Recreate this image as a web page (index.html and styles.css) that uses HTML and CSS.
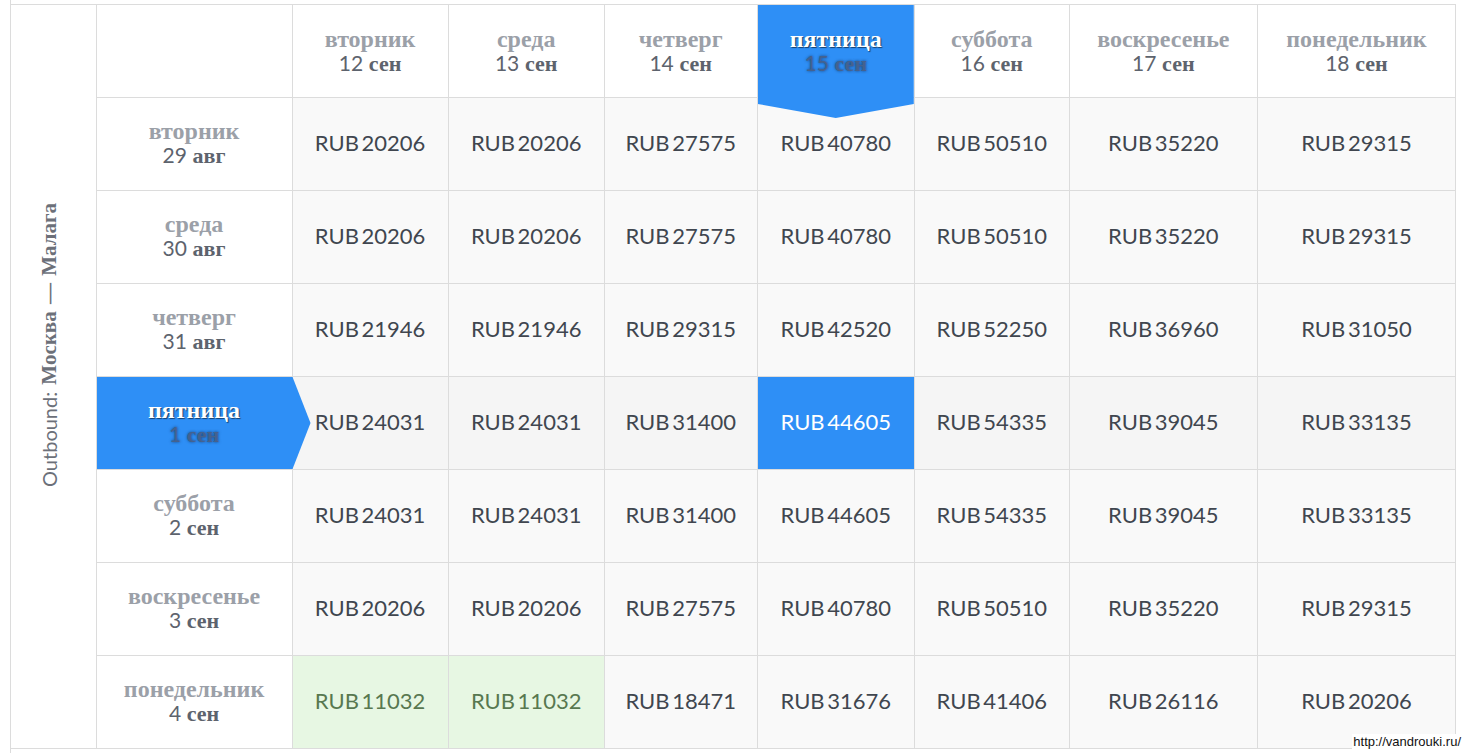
FILE: index.html
```html
<!DOCTYPE html>
<html lang="ru">
<head>
<meta charset="utf-8">
<title>Calendar prices</title>
<link rel="stylesheet" href="styles.css">
</head>
<body>
<div class="wrap">
<table class="grid">
<colgroup>
<col style="width:85px"><col style="width:196px"><col style="width:156px"><col style="width:156px"><col style="width:153px"><col style="width:157px"><col style="width:155px"><col style="width:188px"><col style="width:198px">
</colgroup>
<tr class="head">
<td class="label" rowspan="8"><div class="vtext"><span class="lat">Outbound:</span> <span class="cy">Москва — Малага</span></div></td>
<th class="corner"></th>
<th><span class="day">вторник</span><span class="date"><span class="num">12</span> <span class="cy">сен</span></span></th>
<th><span class="day">среда</span><span class="date"><span class="num">13</span> <span class="cy">сен</span></span></th>
<th><span class="day">четверг</span><span class="date"><span class="num">14</span> <span class="cy">сен</span></span></th>
<th class="sel-col"><span class="day">пятница</span><span class="date"><span class="num">15</span> <span class="cy">сен</span></span></th>
<th><span class="day">суббота</span><span class="date"><span class="num">16</span> <span class="cy">сен</span></span></th>
<th><span class="day">воскресенье</span><span class="date"><span class="num">17</span> <span class="cy">сен</span></span></th>
<th><span class="day">понедельник</span><span class="date"><span class="num">18</span> <span class="cy">сен</span></span></th>
</tr>
<tr>
<th class="rh"><span class="day">вторник</span><span class="date"><span class="num">29</span> <span class="cy">авг</span></span></th>
<td>RUB 20206</td><td>RUB 20206</td><td>RUB 27575</td><td>RUB 40780</td><td>RUB 50510</td><td>RUB 35220</td><td>RUB 29315</td>
</tr>
<tr>
<th class="rh"><span class="day">среда</span><span class="date"><span class="num">30</span> <span class="cy">авг</span></span></th>
<td>RUB 20206</td><td>RUB 20206</td><td>RUB 27575</td><td>RUB 40780</td><td>RUB 50510</td><td>RUB 35220</td><td>RUB 29315</td>
</tr>
<tr>
<th class="rh"><span class="day">четверг</span><span class="date"><span class="num">31</span> <span class="cy">авг</span></span></th>
<td>RUB 21946</td><td>RUB 21946</td><td>RUB 29315</td><td>RUB 42520</td><td>RUB 52250</td><td>RUB 36960</td><td>RUB 31050</td>
</tr>
<tr class="sel-row">
<th class="rh sel-rh"><span class="day">пятница</span><span class="date"><span class="num">1</span> <span class="cy">сен</span></span></th>
<td>RUB 24031</td><td>RUB 24031</td><td>RUB 31400</td><td class="sel-cell">RUB 44605</td><td>RUB 54335</td><td>RUB 39045</td><td>RUB 33135</td>
</tr>
<tr>
<th class="rh"><span class="day">суббота</span><span class="date"><span class="num">2</span> <span class="cy">сен</span></span></th>
<td>RUB 24031</td><td>RUB 24031</td><td>RUB 31400</td><td>RUB 44605</td><td>RUB 54335</td><td>RUB 39045</td><td>RUB 33135</td>
</tr>
<tr>
<th class="rh"><span class="day">воскресенье</span><span class="date"><span class="num">3</span> <span class="cy">сен</span></span></th>
<td>RUB 20206</td><td>RUB 20206</td><td>RUB 27575</td><td>RUB 40780</td><td>RUB 50510</td><td>RUB 35220</td><td>RUB 29315</td>
</tr>
<tr>
<th class="rh"><span class="day">понедельник</span><span class="date"><span class="num">4</span> <span class="cy">сен</span></span></th>
<td class="cheap">RUB 11032</td><td class="cheap">RUB 11032</td><td>RUB 18471</td><td>RUB 31676</td><td>RUB 41406</td><td>RUB 26116</td><td>RUB 20206</td>
</tr>
</table>
<div class="watermark">http://vandrouki.ru/</div>
</div>
</body>
</html>
```

FILE: styles.css
```css
html, body {
  margin: 0;
  padding: 0;
  background: #ffffff;
}
.wrap {
  position: relative;
  margin-left: 10px;
  border-left: 1px solid #dcdcdc;
  height: 753px;
  padding-top: 4px;
  box-sizing: border-box;
}
.grid {
  border-collapse: collapse;
  table-layout: fixed;
  width: 1445px;
  font-family: Lato, "Open Sans", sans-serif;
}
.grid tr {
  height: 93px;
}
.grid th, .grid td {
  border: 1px solid #dcdcdc;
  text-align: center;
  vertical-align: middle;
  padding: 0;
}
.grid td {
  background: #f9f9f9;
  font-size: 22px;
  color: #40464f;
  word-spacing: -3px;
  padding-bottom: 3px;
}
.grid th {
  background: #ffffff;
  font-weight: normal;
}
.grid th.rh {
  padding-bottom: 2px;
}
.grid td.label {
  border-left: none;
  background: #ffffff;
  padding: 0 0 64px 0;
  word-spacing: normal;
}
.vtext {
  writing-mode: vertical-rl;
  transform: rotate(180deg);
  margin: 0 0 0 26px;
  font-size: 20px;
  color: #6c7079;
  white-space: nowrap;
  word-spacing: 2px;
}
.vtext .cy {
  font-family: "Liberation Serif", serif;
  font-weight: bold;
  font-size: 21px;
}
.day {
  display: block;
  font-family: "Liberation Serif", serif;
  font-weight: bold;
  font-size: 24px;
  line-height: 23px;
  color: #9ba0a8;
}
.date {
  display: block;
  font-size: 22px;
  line-height: 23px;
  color: #5d636d;
}
.date .num {
  font-family: Lato, sans-serif;
  font-size: 21px;
}
.date .cy {
  font-family: "Liberation Serif", serif;
  font-weight: bold;
}
.sel-col, .sel-rh {
  position: relative;
}
.sel-col .day, .sel-col .date,
.sel-rh .day, .sel-rh .date {
  position: relative;
  z-index: 2;
}
.sel-col::before {
  content: "";
  position: absolute;
  top: 0;
  left: 0;
  right: 0;
  height: 113px;
  background: #2e8ff6;
  clip-path: polygon(0 0, 100% 0, 100% 87.6%, 50% 100%, 0 87.6%);
  z-index: 1;
}
.sel-rh::before {
  content: "";
  position: absolute;
  top: 0;
  left: 0;
  width: 214px;
  height: 100%;
  background: #2e8ff6;
  clip-path: polygon(0 0, 91.6% 0, 100% 50%, 91.6% 100%, 0 100%);
  z-index: 1;
}
.sel-col .day, .sel-rh .day {
  color: #ffffff;
  text-shadow: 1px 1px 1px rgba(0, 0, 0, 0.55);
}
.sel-col .date, .sel-rh .date {
  color: #44628f;
  text-shadow: 0 0 3px rgba(20, 40, 80, 0.8);
}
.sel-row td {
  background: #f5f5f5;
}
.grid td.sel-cell {
  background: #2e8ff6;
  color: #ffffff;
}
.grid td.cheap {
  background: #e7f7e3;
  color: #587850;
}
.watermark {
  position: absolute;
  right: 8px;
  bottom: 4px;
  font-family: "Liberation Sans", Arial, sans-serif;
  font-size: 13px;
  color: #111111;
  background: #ffffff;
  padding: 0 1px;
}
```
